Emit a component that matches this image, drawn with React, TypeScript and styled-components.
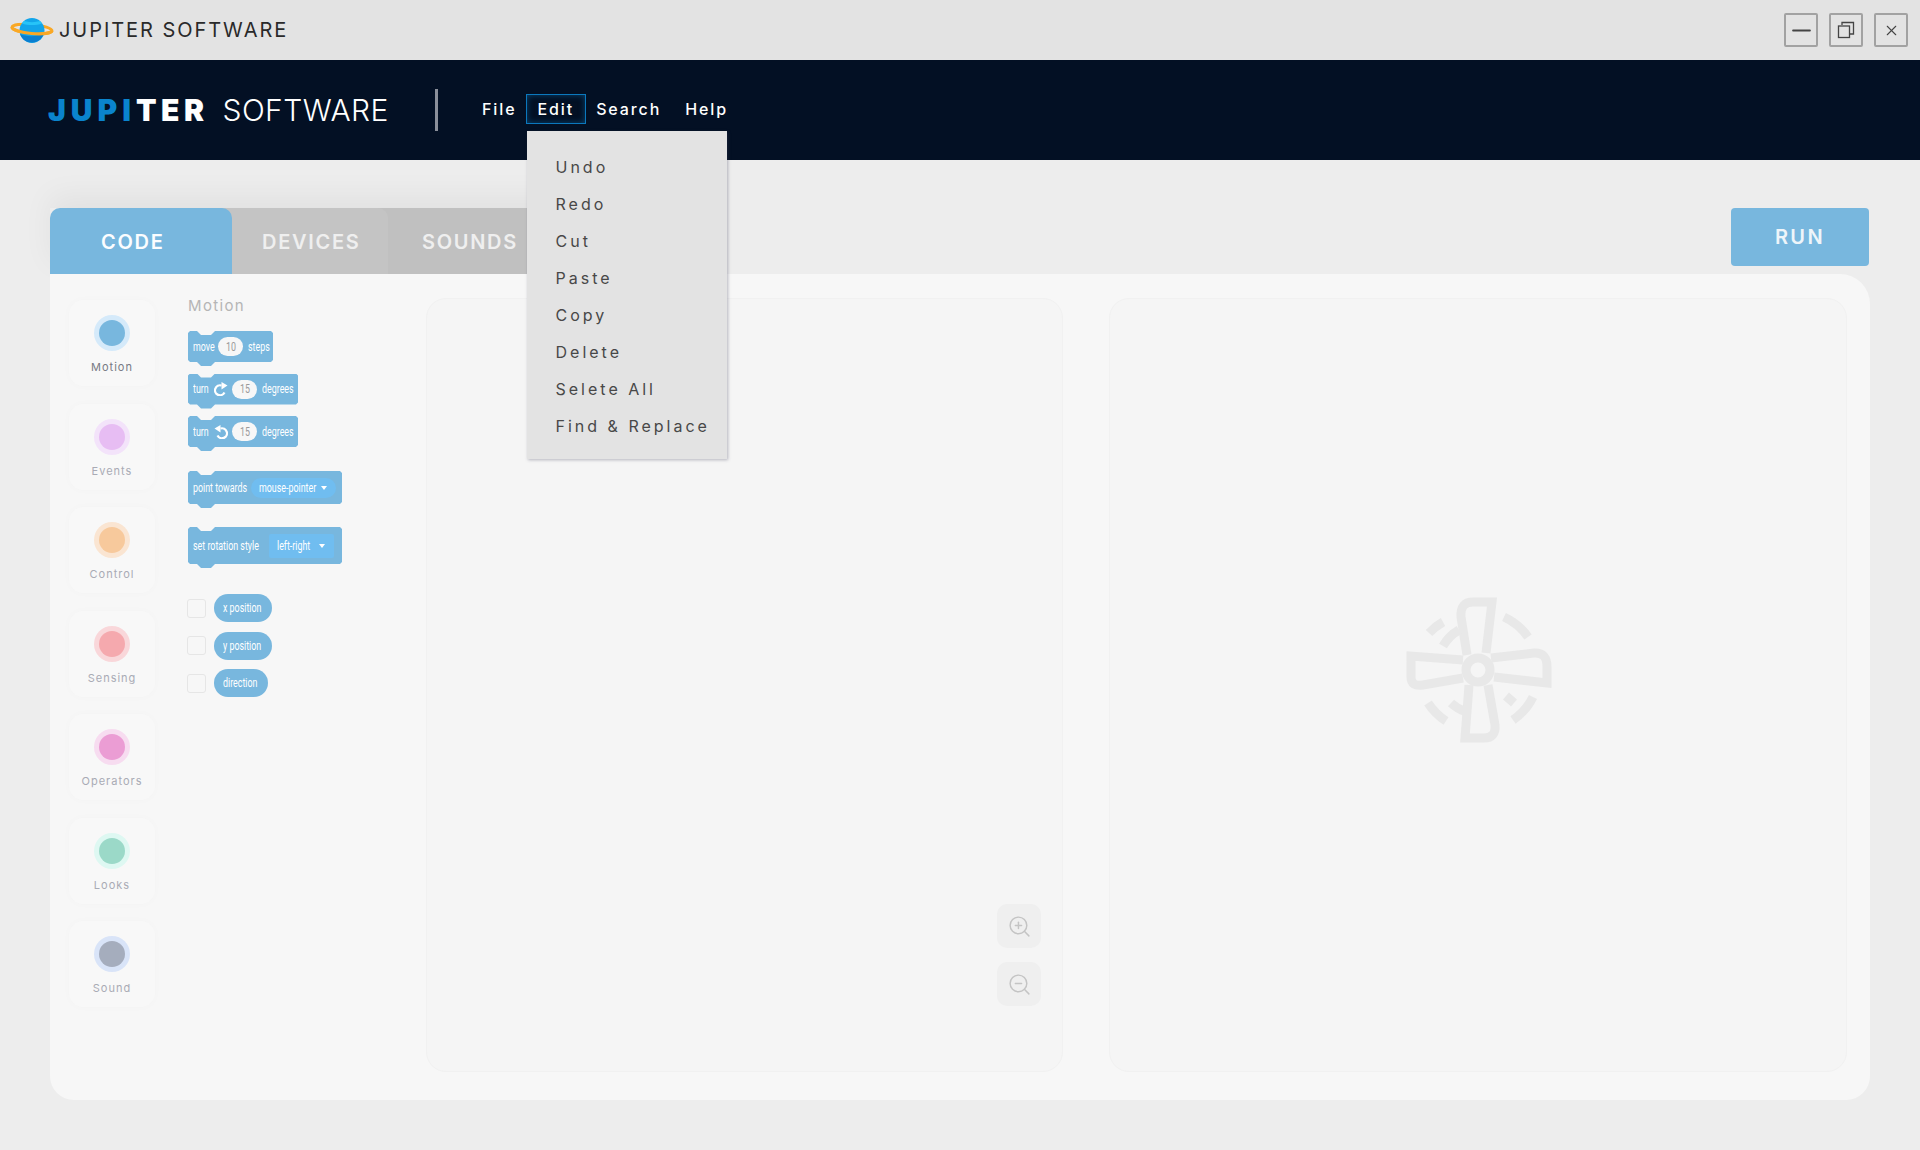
import React from "react";
import styled, { createGlobalStyle } from "styled-components";
import { Minus, X, ZoomIn, ZoomOut } from "lucide-react";

const FONT = `Inter, "Noto Sans", sans-serif`;

const GlobalStyle = createGlobalStyle`
  html, body {
    margin: 0;
    padding: 0;
    background: #ededed;
    font-family: ${FONT};
  }
  * {
    box-sizing: border-box;
  }
`;

const categories = [
  { name: "Motion", inner: "#78b7de", outer: "#d5eafa" },
  { name: "Events", inner: "#e7bdf3", outer: "#f3e3fa" },
  { name: "Control", inner: "#f7c99c", outer: "#fae5d2" },
  { name: "Sensing", inner: "#f5a9ae", outer: "#f9d7da" },
  { name: "Operators", inner: "#eb9dd4", outer: "#f7dcf0" },
  { name: "Looks", inner: "#9bd9c8", outer: "#def8f2" },
  { name: "Sound", inner: "#a5adbd", outer: "#d9e4f8" },
];

const menuItems = ["Undo", "Redo", "Cut", "Paste", "Copy", "Delete", "Selete All", "Find & Replace"];

const Planet = () => (
  <svg width="44" height="28" viewBox="0 0 44 28">
    <ellipse cx="22" cy="13" rx="20" ry="4.500" fill="none" stroke="#f9a825" strokeWidth="3" transform="rotate(5 22 13)" />
    <circle cx="22" cy="14.500" r="12.500" fill="#12a5ea" />
    <path d="M10 18c7 3 17 3 24-1-2 6-6 9.500-12 9.500S12 23 10 18z" fill="#0a7fd0" />
    <path d="M14 5c5 1.500 11 1.500 16 0l2 2.500c-6 2-14 2-20 0z" fill="#27c4f8" />
    <path d="M2 13 A20 4.500 0 0 0 42 13" fill="none" stroke="#f9a825" strokeWidth="3.200" transform="rotate(5 22 13)" />
  </svg>
);

const Fan = () => (
  <svg width="200" height="180" viewBox="0 0 200 180" fill="none" stroke="#e8e8e8" strokeWidth="9">
    <path d="M86 85 L80 47 Q79 32 92 32 L111 32 L105 83" />
    <path d="M110 88 L153 83 Q166 82 166 97 L166 113 L113 107" />
    <path d="M88 115 L84 168 L103 168 Q115 168 114 155 L107 115" />
    <path d="M82 90 L30 86 L30 107 Q30 117 42 115 L82 108" />
    <circle cx="97" cy="100" r="12" />
    <path d="M123 47 A59 59 0 0 1 147 67" />
    <path d="M48 63 A60 60 0 0 1 62 52" />
    <path d="M62 76 A43 43 0 0 1 78 60" />
    <path d="M132 150 A61 61 0 0 0 152 127" />
    <path d="M125 126 L133 133" />
    <path d="M47 133 A61 61 0 0 0 65 151" />
    <path d="M70 133 A43 43 0 0 0 85 142" />
  </svg>
);

const TurnIcon = ({ flip }: { flip?: boolean }) => (
  <svg width="14" height="14" viewBox="0 0 14 14" style={flip ? { transform: "scaleX(-1)" } : undefined}>
    <path d="M10.500 10.500 A5 5 0 1 1 7.500 3.500" fill="none" stroke="#fff" strokeWidth="2.200" />
    <path d="M7.500 0 L13.500 3.500 L7.500 7.500 Z" fill="#fff" />
  </svg>
);

const App = () => {
  return (
    <Page>
      <GlobalStyle />
      <TitleBar>
        <TitleLogo>
          <Planet />
          <TitleText>JUPITER SOFTWARE</TitleText>
        </TitleLogo>
        <WindowControls>
          <WindowButton>
            <Minus size={29} strokeWidth={1.5} />
          </WindowButton>
          <WindowButton>
            <svg width="18" height="18" viewBox="0 0 18 18" fill="none" stroke="#444" strokeWidth="1.3">
              <path d="M5 4V1.500h11.500V13H13" />
              <rect x="1.500" y="5" width="11" height="11.500" />
            </svg>
          </WindowButton>
          <WindowButton>
            <X size={17} strokeWidth={1.5} />
          </WindowButton>
        </WindowControls>
      </TitleBar>

      <NavBar>
        <Brand>
          <BrandBlue>JUPI</BrandBlue>
          <BrandWhite>TER</BrandWhite>
          <BrandLight>SOFTWARE</BrandLight>
        </Brand>
        <NavDivider />
        <NavMenu>
          <NavItem>File</NavItem>
          <NavItem $active $shift={-2}>
            Edit
            <Dropdown>
              {menuItems.map((item) => (
                <DropdownItem key={item}>{item}</DropdownItem>
              ))}
            </Dropdown>
          </NavItem>
          <NavItem $shift={-1}>Search</NavItem>
          <NavItem $shift={2}>Help</NavItem>
        </NavMenu>
      </NavBar>

      <Main>
        <TabRow>
          <Tabs>
            <Tab $active $width={182} $inset={51} $layer={3}>CODE</Tab>
            <Tab $width={166} $inset={40} $layer={2} $overlap>DEVICES</Tab>
            <Tab $width={200} $inset={44} $layer={1} $overlap $dark>SOUNDS</Tab>
          </Tabs>
          <RunButton>RUN</RunButton>
        </TabRow>

        <Panel>
          <Sidebar>
            {categories.map((cat, i) => (
              <CategoryCard key={cat.name}>
                <CategoryDot $inner={cat.inner} $outer={cat.outer} />
                <CategoryName $active={i === 0}>{cat.name}</CategoryName>
              </CategoryCard>
            ))}
          </Sidebar>

          <Palette>
            <PaletteTitle>Motion</PaletteTitle>
            <StackBlocks>
              <Block $width={85}>
                <Label $width={21}>move</Label>
                <NumberInput $left={4}><Label $width={9}>10</Label></NumberInput>
                <Label $width={21} $left={5}>steps</Label>
              </Block>
              <Block $width={110}>
                <Label $width={16}>turn</Label>
                <IconSlot><TurnIcon /></IconSlot>
                <NumberInput $left={4}><Label $width={9}>15</Label></NumberInput>
                <Label $width={30} $left={5}>degrees</Label>
              </Block>
              <Block $width={110}>
                <Label $width={16}>turn</Label>
                <IconSlot><TurnIcon flip /></IconSlot>
                <NumberInput $left={4}><Label $width={9}>15</Label></NumberInput>
                <Label $width={30} $left={5}>degrees</Label>
              </Block>
            </StackBlocks>
            <Block $width={154} $height={37} $top={20}>
              <Label $width={53}>point towards</Label>
              <Chip $round $left={5}>
                <Label $width={57}>mouse-pointer</Label>
                <Caret />
              </Chip>
            </Block>
            <Block $width={154} $height={41} $top={19}>
              <Label $width={70}>set rotation style</Label>
              <Chip $left={6}>
                <Label $width={37}>left-right</Label>
                <Caret />
              </Chip>
            </Block>
            <Reporters>
              {["x position", "y position", "direction"].map((label, i) => (
                <ReporterRow key={label}>
                  <CheckBox />
                  <Reporter $width={i === 2 ? 54 : 58}>
                    <Label $width={i === 2 ? 37 : 40}>{label}</Label>
                  </Reporter>
                </ReporterRow>
              ))}
            </Reporters>
          </Palette>

          <CodeCanvas>
            <ZoomControls>
              <ZoomButton>
                <ZoomIn size={25} strokeWidth={1.4} />
              </ZoomButton>
              <ZoomButton>
                <ZoomOut size={25} strokeWidth={1.4} />
              </ZoomButton>
            </ZoomControls>
          </CodeCanvas>

          <StageCanvas>
            <Fan />
          </StageCanvas>
        </Panel>
      </Main>
    </Page>
  );
};

export default App;

const Page = styled.div`
  width: 1920px;
  height: 1150px;
  overflow: hidden;
  background: #ededed;
  display: flex;
  flex-direction: column;
`;

const TitleBar = styled.div`
  height: 60px;
  background: #e3e3e3;
  display: flex;
  align-items: center;
  justify-content: space-between;
  padding: 0 12px 0 10px;
`;

const TitleLogo = styled.div`
  display: flex;
  align-items: center;
  gap: 5px;
`;

const TitleText = styled.div`
  font-size: 20px;
  font-weight: 400;
  letter-spacing: 1.95px;
  color: #2a2a2a;
`;

const WindowControls = styled.div`
  display: flex;
  gap: 11px;
`;

const WindowButton = styled.div`
  width: 34px;
  height: 34px;
  border: 2px solid #a2a2a2;
  border-radius: 2px;
  color: #444;
  display: flex;
  align-items: center;
  justify-content: center;
`;

const NavBar = styled.div`
  height: 100px;
  background: #031024;
  display: flex;
  align-items: center;
  padding-left: 48px;
`;

const Brand = styled.div`
  width: 340px;
  display: flex;
  align-items: baseline;
  font-size: 30px;
  white-space: nowrap;
`;

const BrandBlue = styled.span`
  color: #0a84cd;
  font-weight: 900;
  letter-spacing: 5px;
`;

const BrandWhite = styled.span`
  color: #fff;
  font-weight: 900;
  letter-spacing: 4.5px;
`;

const BrandLight = styled.span`
  color: #fff;
  font-weight: 300;
  letter-spacing: 0.45px;
  margin-left: 14px;
`;

const NavDivider = styled.div`
  width: 3px;
  height: 42px;
  background: #8a8f9a;
  margin-left: 47px;
`;

const NavMenu = styled.div`
  display: flex;
  align-items: center;
  margin-left: 33px;
  margin-bottom: 2px;
`;

const NavItem = styled.div<{ $active?: boolean; $shift?: number }>`
  position: relative;
  height: 30px;
  margin-left: ${(p) => p.$shift ?? 0}px;
  padding: 0 ${(p) => (p.$active ? 11 : 10)}px;
  display: flex;
  align-items: center;
  color: #fff;
  font-size: 16px;
  font-weight: 500;
  letter-spacing: 1.9px;
  border: 1px solid ${(p) => (p.$active ? "#0b78bd" : "transparent")};
  box-shadow: ${(p) => (p.$active ? "inset 0 0 6px rgba(11,120,189,.5)" : "none")};
`;

const Dropdown = styled.div`
  position: absolute;
  top: 36px;
  left: 0;
  z-index: 5;
  width: 200px;
  height: 328px;
  padding: 17px 0 0 29px;
  background: #e3e3e3;
  box-shadow: 1px 1px 3px rgba(60, 60, 90, 0.35);
`;

const DropdownItem = styled.div`
  height: 37px;
  display: flex;
  align-items: center;
  color: #484848;
  font-size: 16px;
  font-weight: 400;
  letter-spacing: 3px;
  white-space: nowrap;
`;

const Main = styled.div`
  padding: 48px 50px 0;
  display: flex;
  flex-direction: column;
`;

const TabRow = styled.div`
  height: 66px;
  display: flex;
  justify-content: space-between;
  align-items: flex-start;
`;

const Tabs = styled.div`
  display: flex;
  box-shadow: 0 -12px 30px rgba(0, 0, 0, 0.05);
`;

const Tab = styled.div<{ $active?: boolean; $width: number; $inset: number; $layer: number; $overlap?: boolean; $dark?: boolean }>`
  position: relative;
  z-index: ${(p) => p.$layer};
  width: ${(p) => p.$width}px;
  height: 66px;
  margin-left: ${(p) => (p.$overlap ? -10 : 0)}px;
  padding: 2px 0 0 ${(p) => p.$inset}px;
  display: flex;
  align-items: center;
  border-radius: 10px 10px 0 0;
  border-top-left-radius: ${(p) => (p.$active ? "10px" : "0")};
  background: ${(p) => (p.$active ? "#78b7de" : p.$dark ? "#c0c0c0" : "#c4c4c4")};
  color: ${(p) => (p.$active ? "#fbfdff" : "#efefef")};
  font-size: 20px;
  font-weight: 600;
  letter-spacing: 1.7px;
`;

const RunButton = styled.div`
  width: 138px;
  height: 58px;
  margin-right: 1px;
  border-radius: 4px;
  background: #78b7de;
  color: #eef5fa;
  font-size: 20px;
  font-weight: 600;
  letter-spacing: 2.4px;
  display: flex;
  align-items: center;
  justify-content: center;
`;

const Panel = styled.div`
  width: 1820px;
  height: 826px;
  background: #f7f7f7;
  border-radius: 0 30px 24px 24px;
  padding: 24px 23px 28px 19px;
  display: flex;
`;

const Sidebar = styled.div`
  width: 86px;
  padding-top: 2px;
  display: flex;
  flex-direction: column;
  gap: 17.500px;
`;

const CategoryCard = styled.div`
  height: 86px;
  flex: none;
  border-radius: 14px;
  background: #f8f8f8;
  box-shadow: 0 0 8px rgba(0, 0, 0, 0.02);
  display: flex;
  flex-direction: column;
  align-items: center;
  padding-top: 15px;
`;

const CategoryDot = styled.div<{ $inner: string; $outer: string }>`
  width: 26px;
  height: 26px;
  margin: 5px 0;
  border-radius: 50%;
  background: ${(p) => p.$inner};
  box-shadow: 0 0 0 5px ${(p) => p.$outer};
`;

const CategoryName = styled.div<{ $active?: boolean }>`
  margin-top: 9px;
  font-size: 11px;
  letter-spacing: 1px;
  color: ${(p) => (p.$active ? "#777a84" : "#a9abb5")};
`;

const Palette = styled.div`
  width: 238px;
  margin-left: 33px;
  flex: none;
  display: flex;
  flex-direction: column;
`;

const PaletteTitle = styled.div`
  height: 14px;
  margin-top: 1px;
  line-height: 14px;
  font-size: 15px;
  letter-spacing: 1.35px;
  color: #b5b5b5;
`;

const StackBlocks = styled.div`
  display: flex;
  flex-direction: column;
  gap: 7.500px;
  margin-top: 18px;
`;

const Block = styled.div<{ $width: number; $height?: number; $top?: number }>`
  width: ${(p) => p.$width}px;
  height: ${(p) => p.$height ?? 35}px;
  margin-top: ${(p) => p.$top ?? 0}px;
  padding: 0 0 4px 5px;
  background: #78b7de;
  color: #fff;
  font-family: Roboto, sans-serif;
  font-size: 12px;
  white-space: nowrap;
  display: flex;
  align-items: center;
  flex: none;
  clip-path: polygon(
    2px 0,
    9px 0,
    13px 4px,
    23px 4px,
    27px 0,
    calc(100% - 2px) 0,
    100% 2px,
    100% calc(100% - 6px),
    calc(100% - 2px) calc(100% - 4px),
    27px calc(100% - 4px),
    23px 100%,
    13px 100%,
    9px calc(100% - 4px),
    2px calc(100% - 4px),
    0 calc(100% - 6px),
    0 2px
  );
`;

// the block text in the picture is a condensed face, so it is squeezed from the left edge
const Label = styled.span<{ $width: number; $left?: number }>`
  display: inline-block;
  width: ${(p) => p.$width}px;
  margin-left: ${(p) => p.$left ?? 0}px;
  transform: scaleX(0.74);
  transform-origin: left center;
  white-space: nowrap;
  flex: none;
`;

const IconSlot = styled.span`
  margin-left: 5px;
  display: flex;
`;

const NumberInput = styled.span<{ $left: number }>`
  width: 25px;
  height: 19px;
  margin-left: ${(p) => p.$left}px;
  border-radius: 10px;
  background: #f7f7f7;
  color: #9a9a9a;
  display: flex;
  align-items: center;
  justify-content: center;
  flex: none;
`;

const Chip = styled.span<{ $round?: boolean; $left: number }>`
  height: ${(p) => (p.$round ? 20 : 24)}px;
  margin-left: ${(p) => p.$left}px;
  padding: 0 9px 0 8px;
  border-radius: ${(p) => (p.$round ? 10 : 2)}px;
  background: #70bdf0;
  display: flex;
  align-items: center;
  gap: 5px;
`;

const Caret = styled.span`
  width: 0;
  height: 0;
  border-left: 3.500px solid transparent;
  border-right: 3.500px solid transparent;
  border-top: 4px solid #fff;
`;

const Reporters = styled.div`
  display: flex;
  flex-direction: column;
  gap: 9.500px;
  margin-top: 26px;
`;

const ReporterRow = styled.div`
  display: flex;
  align-items: center;
  gap: 8px;
  margin-left: -1px;
`;

const CheckBox = styled.div`
  width: 19px;
  height: 19px;
  border: 1px solid #e6e6e6;
  border-radius: 3px;
  background: #f7f7f7;
`;

const Reporter = styled.div<{ $width: number }>`
  width: ${(p) => p.$width}px;
  height: 28px;
  padding-left: 9px;
  border-radius: 14px;
  background: #78b7de;
  color: #fff;
  font-family: Roboto, sans-serif;
  font-size: 12px;
  display: flex;
  align-items: center;
`;

const CodeCanvas = styled.div`
  position: relative;
  width: 637px;
  flex: none;
  background: #f5f5f5;
  border: 1px solid #f1f1f1;
  border-radius: 20px;
`;

const ZoomControls = styled.div`
  position: absolute;
  right: 21px;
  bottom: 65px;
  display: flex;
  flex-direction: column;
  gap: 14px;
`;

const ZoomButton = styled.div`
  width: 44px;
  height: 44px;
  border-radius: 10px;
  background: #efefef;
  color: #c4c4c4;
  display: flex;
  align-items: center;
  justify-content: center;
`;

const StageCanvas = styled.div`
  width: 738px;
  margin-left: 46px;
  padding: 0 0 50px 6px;
  flex: none;
  background: #f5f5f5;
  border: 1px solid #f1f1f1;
  border-radius: 20px;
  display: flex;
  align-items: center;
  justify-content: center;
`;
